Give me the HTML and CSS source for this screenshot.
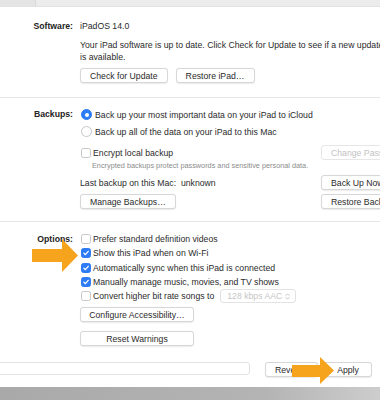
FILE: index.html
```html
<!DOCTYPE html>
<html lang="en">
<head>
  <meta charset="UTF-8" />
  <title>iPad – General</title>
  <link rel="stylesheet" href="styles.css">
</head>
<body>
  <div class="window">
    <div class="tabs">
      <div class="tab"></div>
    </div>

    <div class="section software">
      <div class="label">Software:</div>
      <div class="body">
        <div class="line">iPadOS 14.0</div>
        <p class="desc">Your iPad software is up to date. Click Check for Update to see if a new update is available.</p>
        <div class="buttons">
          <button class="btn">Check for Update</button>
          <button class="btn">Restore iPad…</button>
        </div>
      </div>
    </div>

    <div class="section backups">
      <div class="label">Backups:</div>
      <div class="body">
        <div class="opt radio-row">
          <span class="rd on"></span>
          <span>Back up your most important data on your iPad to iCloud</span>
        </div>
        <div class="opt radio-row">
          <span class="rd"></span>
          <span>Back up all of the data on your iPad to this Mac</span>
        </div>

        <div class="brow encrypt">
          <div class="bmain opt">
            <span class="cb"></span>
            <span>Encrypt local backup</span>
          </div>
          <button class="btn disabled">Change Password…</button>
        </div>
        <p class="note">Encrypted backups protect passwords and sensitive personal data.</p>

        <div class="brow last">
          <div class="bmain">Last backup on this Mac:&nbsp; unknown</div>
          <button class="btn">Back Up Now</button>
        </div>
        <div class="brow manage">
          <div class="bmain"><button class="btn">Manage Backups…</button></div>
          <button class="btn">Restore Backup…</button>
        </div>
      </div>
    </div>

    <div class="section options">
      <div class="label">Options:</div>
      <div class="body">
        <div class="opt check-row"><span class="cb"></span><span>Prefer standard definition videos</span></div>
        <div class="opt check-row"><span class="cb on"><svg viewBox="0 0 10 10"><polyline points="2.3,5.2 4.2,7.1 7.8,2.9"/></svg></span><span>Show this iPad when on Wi-Fi</span></div>
        <div class="opt check-row"><span class="cb on"><svg viewBox="0 0 10 10"><polyline points="2.3,5.2 4.2,7.1 7.8,2.9"/></svg></span><span>Automatically sync when this iPad is connected</span></div>
        <div class="opt check-row"><span class="cb on"><svg viewBox="0 0 10 10"><polyline points="2.3,5.2 4.2,7.1 7.8,2.9"/></svg></span><span>Manually manage music, movies, and TV shows</span></div>
        <div class="opt check-row">
          <span class="cb"></span><span>Convert higher bit rate songs to</span>
          <div class="select">
            <span>128 kbps AAC</span>
            <svg viewBox="0 0 8 10"><polyline points="2,4 4,2 6,4"/><polyline points="2,6 4,8 6,6"/></svg>
          </div>
        </div>
        <button class="btn wide configure">Configure Accessibility…</button>
        <button class="btn wide reset">Reset Warnings</button>
      </div>
    </div>

    <div class="footer">
      <div class="storage"></div>
      <button class="btn revert">Revert</button>
      <button class="btn apply">Apply</button>
    </div>
    <div class="edge"></div>

    <!-- callout arrows drawn over the window -->
    <svg class="arrows" viewBox="0 0 380 400">
      <polygon points="32,249 62,249 62,239 78,255.5 62,272 62,262 32,262"/>
      <polygon points="292,365 320,365 320,357 334,370.5 320,384 320,377 292,377"/>
    </svg>
  </div>
</body>
</html>
```

FILE: styles.css
```css
* {
  margin: 0;
  padding: 0;
  box-sizing: border-box;
}

body {
  background: #fff;
  overflow: hidden;
}

.window {
  position: relative;
  width: 380px;
  height: 400px;
  overflow: hidden;
  background: #fff;
  font-family: "Liberation Sans", Arial, sans-serif;
  font-size: 8.7px;
  color: #2b2b2b;
}

.tabs {
  display: flex;
  height: 7px;
  background: #ececec;
  border-bottom: 1px solid #e2e2e2;
}
.tab {
  width: 36px;
  background: #e4e4e4;
  border-right: 1px solid #d9d9d9;
}

.section {
  display: grid;
  grid-template-columns: 73px 1fr;
  column-gap: 7px;
  border-bottom: 1px solid #e6e6e6;
}

.label {
  text-align: right;
  font-weight: bold;
  color: #222;
}

.body {
  width: 460px;
}

/* software */
.software {
  padding: 13px 0 14px;
}
.software .label,
.software .line {
  line-height: 12px;
}
.desc {
  margin-top: 8px;
  line-height: 11.5px;
  width: 308px;
}
.buttons {
  display: flex;
  gap: 8px;
  margin-top: 5px;
}

/* buttons */
.btn {
  display: inline-flex;
  align-items: center;
  justify-content: center;
  height: 15px;
  padding: 0 9px;
  background: #fff;
  border: 1px solid #d7d7d7;
  border-radius: 3px;
  box-shadow: 0 0.5px 1px rgba(0, 0, 0, 0.08);
  font: inherit;
  color: #2b2b2b;
  white-space: nowrap;
}
.btn.disabled {
  color: #c2c2c2;
  border-color: #e6e6e6;
  box-shadow: none;
}
.btn.wide {
  width: 114px;
}

/* backups */
.backups {
  padding: 8px 0 12px;
}
.backups .label {
  line-height: 17px;
}
.opt {
  display: flex;
  align-items: center;
  white-space: nowrap;
}
.radio-row {
  height: 17px;
}
.brow {
  display: flex;
  align-items: center;
  height: 15px;
}
.bmain {
  width: 241px;
}
.encrypt {
  margin-top: 5px;
}
.note {
  font-size: 7.3px;
  line-height: 11px;
  color: #8c8c8c;
  padding-left: 12px;
}
.last {
  margin-top: 4px;
}
.manage {
  margin-top: 4px;
}

.rd {
  width: 11px;
  height: 11px;
  margin: 0 3px 0 1px;
  border: 1px solid #c6c6c6;
  border-radius: 50%;
  background: #fff;
  display: flex;
  align-items: center;
  justify-content: center;
}
.rd.on {
  background: #2d7cf6;
  border-color: #2d7cf6;
}
.rd.on::after {
  content: "";
  width: 4px;
  height: 4px;
  border-radius: 50%;
  background: #fff;
}

.cb {
  width: 10px;
  height: 10px;
  margin: 0 2px 0 1px;
  border: 1px solid #c6c6c6;
  border-radius: 2.5px;
  background: #fff;
  display: flex;
}
.cb.on {
  background: #2d7cf6;
  border-color: #2d7cf6;
}
.cb svg {
  width: 100%;
  height: 100%;
  fill: none;
  stroke: #fff;
  stroke-width: 1.6;
  stroke-linecap: round;
  stroke-linejoin: round;
}

/* options */
.options {
  padding: 10px 0 0;
  border-bottom: none;
}
.options .label {
  line-height: 14.25px;
}
.check-row {
  height: 14.25px;
}
.select {
  display: flex;
  align-items: center;
  justify-content: space-between;
  width: 76px;
  height: 14px;
  margin-left: 6px;
  padding: 0 4px 0 6px;
  border: 1px solid #e3e3e3;
  border-radius: 3px;
  color: #c6c6c6;
}
.select svg {
  width: 7px;
  height: 9px;
  fill: none;
  stroke: #b5b5b5;
  stroke-width: 1;
}
.configure {
  display: flex;
  margin-top: 4px;
}
.reset {
  display: flex;
  margin-top: 9px;
}

/* footer */
.footer {
  display: flex;
  align-items: flex-start;
  height: 15px;
  margin-top: 16px;
}
.storage {
  width: 260px;
  height: 13px;
  margin-left: -10px;
  border: 1px solid #e2e2e2;
  border-radius: 3px;
  background: #fff;
}
.revert {
  width: 53px;
  margin-left: 15px;
  justify-content: flex-start;
}
.apply {
  width: 48px;
  margin-left: 6px;
}

.edge {
  height: 13px;
  margin-top: 10px;
  background: linear-gradient(90deg, #a9a9a9, #b4b4b4 70%, #cdcdcd);
}

.arrows {
  position: absolute;
  top: 0;
  left: 0;
  width: 380px;
  height: 400px;
  fill: #f6a31d;
  pointer-events: none;
}
```
